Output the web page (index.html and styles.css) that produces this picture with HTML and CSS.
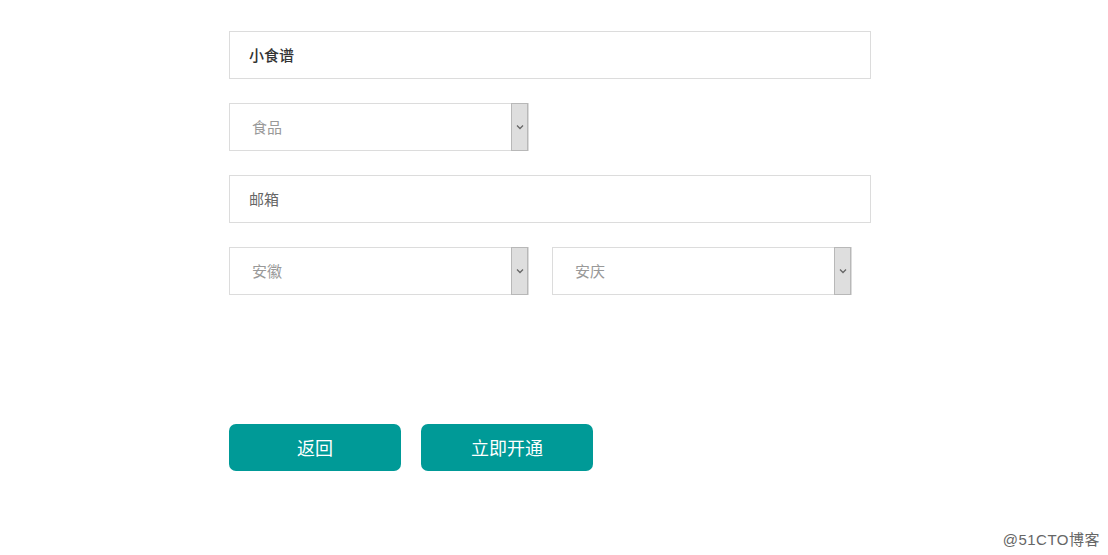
FILE: index.html
```html
<!DOCTYPE html>
<html lang="zh">
<head>
<meta charset="utf-8">
<link rel="stylesheet" href="styles.css">
</head>
<body>
<main class="form">
  <div class="field field-wide"><span class="value">小食谱</span></div>
  <div class="row">
    <div class="select"><span class="placeholder">食品</span><span class="arrow"><svg width="8" height="6" viewBox="0 0 8 6"><path d="M1 1.5 L4 4.5 L7 1.5" fill="none" stroke="#666" stroke-width="1.3"/></svg></span></div>
  </div>
  <div class="field field-wide"><span class="hint">邮箱</span></div>
  <div class="row">
    <div class="select"><span class="placeholder">安徽</span><span class="arrow"><svg width="8" height="6" viewBox="0 0 8 6"><path d="M1 1.5 L4 4.5 L7 1.5" fill="none" stroke="#666" stroke-width="1.3"/></svg></span></div>
    <div class="select"><span class="placeholder">安庆</span><span class="arrow"><svg width="8" height="6" viewBox="0 0 8 6"><path d="M1 1.5 L4 4.5 L7 1.5" fill="none" stroke="#666" stroke-width="1.3"/></svg></span></div>
  </div>
  <div class="actions">
    <button class="btn">返回</button>
    <button class="btn">立即开通</button>
  </div>
</main>
<div class="watermark">@51CTO博客</div>
</body>
</html>
```

FILE: styles.css
```css
html, body {
  margin: 0;
  padding: 0;
  background: #fff;
  font-family: "Noto Sans CJK SC", "Noto Sans", sans-serif;
}
body {
  width: 1108px;
  height: 555px;
  position: relative;
  overflow: hidden;
}
.form {
  padding: 31px 0 0 229px;
  display: flex;
  flex-direction: column;
  gap: 24px;
}
.field {
  box-sizing: border-box;
  height: 48px;
  border: 1px solid #dcdcdc;
  display: flex;
  align-items: center;
  padding-left: 19px;
  padding-bottom: 2px;
  font-size: 15px;
}
.field-wide { width: 642px; }
.value { color: #333; font-weight: 500; }
.hint { color: #666; }
.row {
  display: flex;
  gap: 23px;
}
.select {
  box-sizing: border-box;
  width: 300px;
  height: 48px;
  border: 1px solid #dcdcdc;
  display: flex;
  align-items: center;
  justify-content: space-between;
  padding-left: 22px;
  font-size: 15px;
}
.placeholder { color: #999; margin-bottom: 2px; }
.arrow {
  box-sizing: border-box;
  width: 17px;
  height: 48px;
  background: #dedede;
  border: 1px solid #b8b8b8;
  display: flex;
  align-items: center;
  justify-content: center;
}
.actions {
  display: flex;
  gap: 20px;
  margin-top: 105px;
}
.btn {
  width: 172px;
  height: 47px;
  border: none;
  border-radius: 7px;
  background: #009a97;
  color: #fff;
  font-family: "Noto Sans CJK SC", sans-serif;
  font-size: 18px;
  padding: 0 0 2px 0;
}
.watermark {
  position: absolute;
  right: 8px;
  bottom: 6px;
  font-size: 15px;
  letter-spacing: 0.5px;
  color: #666;
  font-family: "Liberation Sans", "Noto Sans CJK SC", sans-serif;
}
```
